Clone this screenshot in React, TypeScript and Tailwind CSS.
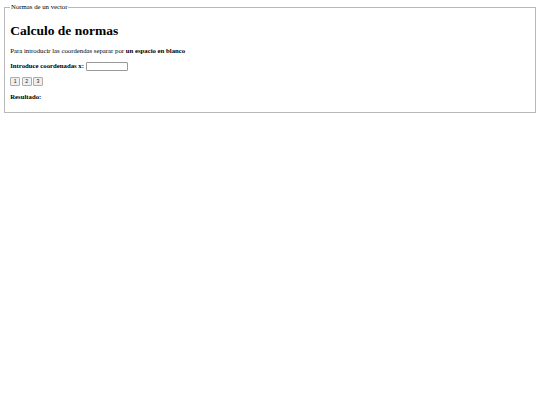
export default function App() {
  return (
    <div className="min-h-screen bg-white p-[3.4px] font-['Liberation_Serif',serif] text-[6.75px] leading-[1.15] text-black">
      <fieldset className="mx-[0.85px] border border-[#b8b8b8] px-[5px] pb-[4.2px] pt-[2.4px]">
        <legend className="px-[0.85px]">Normas de un vector</legend>
        <h1 className="my-[9px] text-[13.5px] font-bold leading-[1.15]">Calculo de normas</h1>
        <p className="my-[6.75px]">
          Para introducir las coordendas separar por <b>un espacio en blanco</b>
        </p>
        <p className="my-[6.75px] flex items-center gap-[1.5px]">
          <b>Introduce coordenadas x:</b>
          <input
            type="text"
            className="h-[9px] w-[42px] rounded-[1px] border border-[#9a9a9a] bg-white px-px text-[5.6px]"
          />
        </p>
        <div className="flex gap-[1.4px]">
          {["1", "2", "3"].map((n) => (
            <button
              key={n}
              className="h-[9px] w-[10px] rounded-[1px] border border-[#acacac] bg-[#efefef] font-['Liberation_Sans',sans-serif] text-[5.2px] leading-none text-[#222]"
            >
              {n}
            </button>
          ))}
        </div>
        <p className="my-[6.75px]">
          <b>Resultado:</b>
        </p>
      </fieldset>
    </div>
  );
}
